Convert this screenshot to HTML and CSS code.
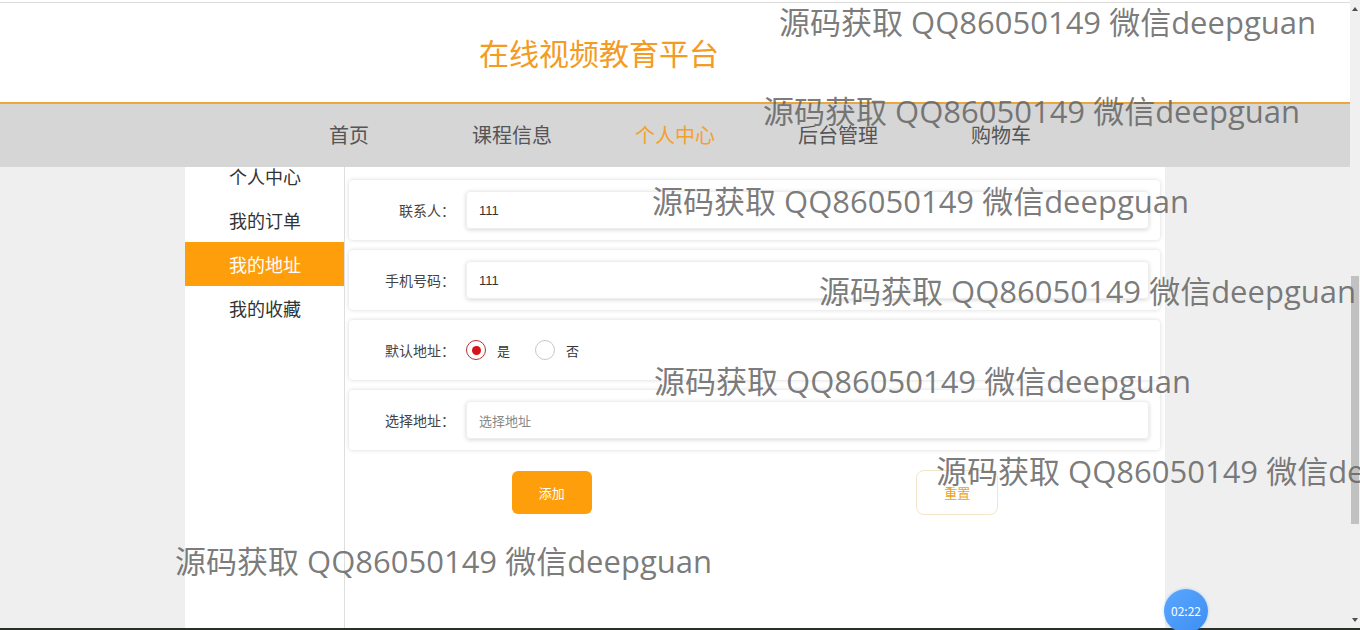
FILE: index.html
```html
<!DOCTYPE html>
<html lang="zh">
<head>
<meta charset="utf-8">
<title>在线视频教育平台</title>
<link rel="stylesheet" href="styles.css">
</head>
<body>
<div class="screen">
  <div class="page">
    <header class="header">
      <div class="topline"></div>
      <h1 class="title">在线视频教育平台</h1>
    </header>
    <nav class="nav">
      <a class="nav-item">首页</a>
      <a class="nav-item">课程信息</a>
      <a class="nav-item active">个人中心</a>
      <a class="nav-item">后台管理</a>
      <a class="nav-item">购物车</a>
    </nav>
    <main class="main">
      <div class="container">
        <aside class="sidebar">
          <div class="side-item">个人中心</div>
          <div class="side-item">我的订单</div>
          <div class="side-item active">我的地址</div>
          <div class="side-item">我的收藏</div>
        </aside>
        <section class="content">
          <div class="form-row">
            <label class="label">联系人：</label>
            <div class="input">111</div>
          </div>
          <div class="form-row">
            <label class="label">手机号码：</label>
            <div class="input">111</div>
          </div>
          <div class="form-row">
            <label class="label">默认地址：</label>
            <div class="radios">
              <span class="radio checked"></span><span class="radio-text">是</span>
              <span class="radio"></span><span class="radio-text">否</span>
            </div>
          </div>
          <div class="form-row">
            <label class="label">选择地址：</label>
            <div class="input placeholder">选择地址</div>
          </div>
          <div class="buttons">
            <div class="btn-cell"><button class="btn btn-primary">添加</button></div>
            <div class="btn-cell"><button class="btn btn-plain">重置</button></div>
          </div>
        </section>
      </div>
    </main>
  </div>
  <div class="scrollbar">
    <div class="arrow up"></div>
    <div class="track"><div class="thumb"></div></div>
    <div class="arrow down"></div>
  </div>
</div>
<div class="taskbar"></div>

<div class="timer">02:22</div>

<div class="watermarks">
  <span class="wm wm1">源码获取 QQ86050149 微信deepguan</span>
  <span class="wm wm2">源码获取 QQ86050149 微信deepguan</span>
  <span class="wm wm3">源码获取 QQ86050149 微信deepguan</span>
  <span class="wm wm4">源码获取 QQ86050149 微信deepguan</span>
  <span class="wm wm5">源码获取 QQ86050149 微信deepguan</span>
  <span class="wm wm6">源码获取 QQ86050149 微信deepguan</span>
  <span class="wm wm7">源码获取 QQ86050149 微信deepguan</span>
</div>
</body>
</html>
```

FILE: styles.css
```css
* { box-sizing: border-box; }
html, body {
  margin: 0;
  padding: 0;
  width: 1360px;
  height: 630px;
  overflow: hidden;
  font-family: "Noto Sans CJK SC", "Liberation Sans", sans-serif;
  background: #efefef;
}
.screen {
  display: flex;
  height: 628px;
}
.page {
  width: 1350px;
  height: 628px;
  display: flex;
  flex-direction: column;
  overflow: hidden;
}
.header {
  background: #fff;
  padding-top: 2px;
  border-bottom: 2px solid #eda63c;
  height: 104px;
}
.topline {
  height: 1px;
  background: #dcdcdc;
}
.title {
  margin: 0;
  padding: 20px 0 0 479px;
  font-size: 30px;
  line-height: 58px;
  height: 58px;
  font-weight: normal;
  color: #f39b22;
}
.nav {
  height: 63px;
  background: #d6d6d6;
  display: flex;
  justify-content: center;
  align-items: center;
  padding-bottom: 2px;
  position: relative;
  z-index: 2;
}
.nav-item {
  width: 163px;
  text-align: center;
  font-size: 20px;
  color: #555;
  line-height: 26px;
}
.nav-item.active { color: #f5a02e; }

.main {
  flex: 1;
  overflow: hidden;
  position: relative;
}
.container {
  width: 980px;
  margin: -13px auto 0;
  display: flex;
  height: 500px;
}
.sidebar {
  width: 160px;
  background: #fff;
  border-right: 1px solid #dedede;
}
.side-item {
  height: 44px;
  line-height: 44px;
  padding-left: 44px;
  font-size: 18px;
  color: #333;
}
.side-item.active {
  background: #ff9e0b;
  color: #fff;
}
.content {
  width: 820px;
  background: #fff;
  padding: 26px 5px 0 4px;
  display: flex;
  flex-direction: column;
  gap: 10px;
}
.form-row {
  height: 60px;
  display: flex;
  align-items: center;
  border-radius: 4px;
  box-shadow: 0 0 4px rgba(0, 0, 0, 0.16);
  padding-right: 11px;
}
.label {
  width: 106px;
  text-align: right;
  font-size: 14px;
  color: #444;
  margin-right: 11px;
}
.input {
  flex: 1;
  height: 38px;
  line-height: 38px;
  border-radius: 4px;
  border: 1px solid #eee;
  box-shadow: 0 1px 4px rgba(0, 0, 0, 0.16);
  padding-left: 12px;
  font-family: "Liberation Sans", "Noto Sans CJK SC", sans-serif;
  font-size: 13px;
  color: #333;
}
.input.placeholder {
  font-family: "Noto Sans CJK SC", sans-serif;
  color: #888;
}
.radios {
  display: flex;
  align-items: center;
}
.radio {
  width: 20px;
  height: 20px;
  border-radius: 50%;
  border: 1px solid #c8c8c8;
  display: flex;
  align-items: center;
  justify-content: center;
}
.radio.checked { border-color: #b63030; }
.radio.checked::after {
  content: "";
  width: 9px;
  height: 9px;
  border-radius: 50%;
  background: #d4141a;
}
.radio-text {
  font-size: 13px;
  color: #333;
  margin: 0 25px 0 11px;
}
.buttons {
  display: flex;
  margin-top: 11px;
}
.btn-cell {
  flex: 1;
  display: flex;
  justify-content: center;
}
.btn {
  font-family: "Noto Sans CJK SC", sans-serif;
  font-size: 13px;
  cursor: pointer;
}
.btn-primary {
  width: 80px;
  height: 43px;
  border: none;
  border-radius: 6px;
  background: #ff9e0b;
  color: #fff;
}
.btn-plain {
  width: 82px;
  height: 45px;
  margin-top: -1px;
  border: 1px solid #f4e6c8;
  border-radius: 8px;
  background: #fff;
  color: #f0a020;
}

.scrollbar {
  width: 10px;
  background: #f0f0f0;
  display: flex;
  flex-direction: column;
}
.arrow {
  height: 17px;
  display: flex;
  justify-content: center;
  align-items: center;
}
.arrow.up::after {
  content: "";
  border-left: 3px solid transparent;
  border-right: 3px solid transparent;
  border-bottom: 4px solid #505050;
}
.arrow.down::after {
  content: "";
  border-left: 3px solid transparent;
  border-right: 3px solid transparent;
  border-top: 4px solid #505050;
}
.track {
  flex: 1;
  padding: 259px 1px 0;
}
.thumb {
  height: 248px;
  background: #c1c1c1;
}
.taskbar {
  height: 2px;
  background: #283028;
}

.timer {
  position: absolute;
  left: 1164px;
  top: 589px;
  width: 44px;
  height: 44px;
  border-radius: 50%;
  background: linear-gradient(135deg, #5aa7ff, #3d8ef2);
  color: #fff;
  font-family: "Noto Sans CJK SC", sans-serif;
  font-size: 12px;
  line-height: 44px;
  text-align: center;
  box-shadow: 0 0 3px rgba(60, 140, 240, 0.4);
  z-index: 5;
}

.watermarks {
  position: absolute;
  left: 0;
  top: 0;
  width: 1360px;
  height: 630px;
  overflow: hidden;
  pointer-events: none;
  z-index: 10;
}
.wm {
  position: absolute;
  white-space: nowrap;
  font-family: "Open Sans", "Noto Sans CJK SC", sans-serif;
  font-size: 31px;
  line-height: 40px;
  color: rgba(100, 100, 100, 0.85);
}
.wm1 { left: 779px; top: 2px; }
.wm2 { left: 763px; top: 91px; }
.wm3 { left: 652px; top: 181px; }
.wm4 { left: 819px; top: 271px; }
.wm5 { left: 654px; top: 361px; }
.wm6 { left: 936px; top: 451px; }
.wm7 { left: 175px; top: 541px; }
```
